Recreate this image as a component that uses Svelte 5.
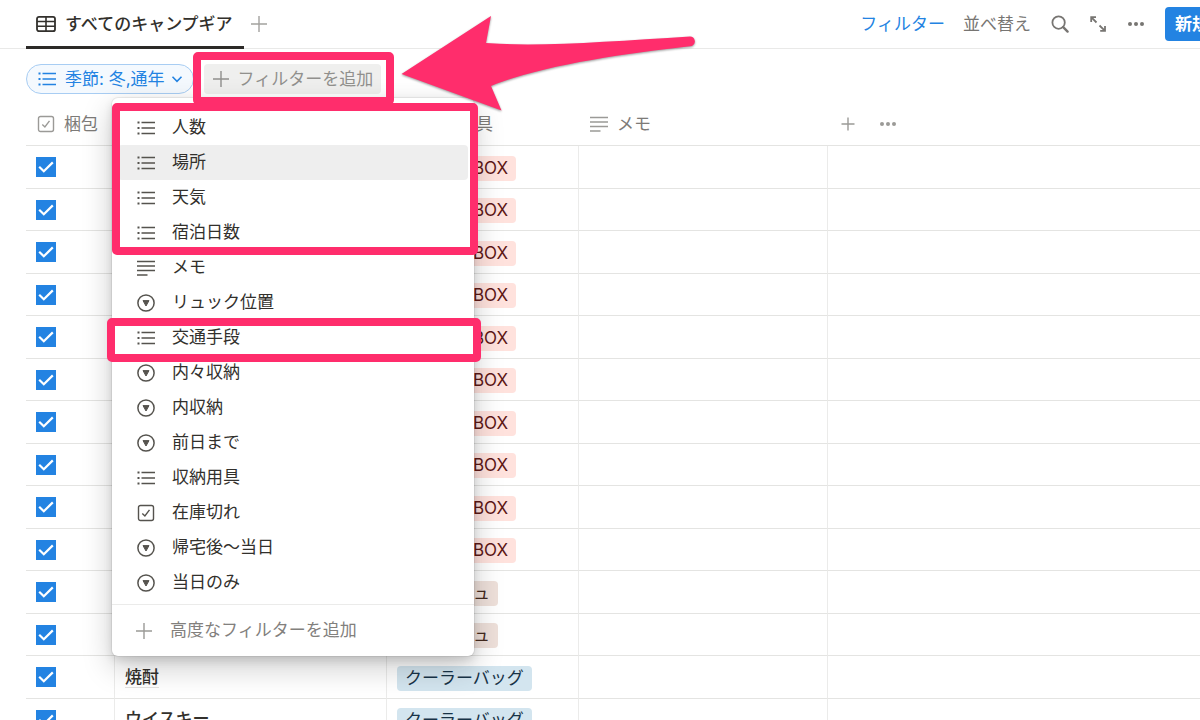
<script lang="ts">
	type Row = { name: string, tag: string, color: string, checked: boolean }

	const box = { name: '', tag: 'コンテナBOX', color: 'red', checked: true }
	const mesh = { name: '', tag: '大メッシュ', color: 'brown', checked: true }
	const cooler = { tag: 'クーラーバッグ', color: 'blue', checked: true }

	let rows: Row[] = $state([
		...Array.from({ length: 10 }, () => ({ ...box })),
		{ ...mesh },
		{ ...mesh },
		{ name: '焼酎', ...cooler },
		{ name: 'ウイスキー', ...cooler }
	])

	const properties = [
		{ icon: 'list', label: '人数' },
		{ icon: 'list', label: '場所' },
		{ icon: 'list', label: '天気' },
		{ icon: 'list', label: '宿泊日数' },
		{ icon: 'text', label: 'メモ' },
		{ icon: 'select', label: 'リュック位置' },
		{ icon: 'list', label: '交通手段' },
		{ icon: 'select', label: '内々収納' },
		{ icon: 'select', label: '内収納' },
		{ icon: 'select', label: '前日まで' },
		{ icon: 'list', label: '収納用具' },
		{ icon: 'check', label: '在庫切れ' },
		{ icon: 'select', label: '帰宅後〜当日' },
		{ icon: 'select', label: '当日のみ' }
	]

	let active = $state(1)
</script>

{#snippet icon(name: string)}
	<svg class="icon" viewBox="0 0 18 18" aria-hidden="true">
		{#if name == 'list'}
			<path d="M4.5 3.5H18M4.5 9H18M4.5 14.5H18" stroke-width="1.4" />
			<path d="M0.500 3.500H2.500M0.500 9H2.500M0.500 14.500H2.500" stroke-width="2" />
		{:else if name == 'text'}
			<path d="M0 2.5H18M0 7H18M0 11.5H18M0 16H10.5" stroke-width="1.4" />
		{:else if name == 'select'}
			<circle cx="9" cy="9" r="8.1" stroke-width="1.5" />
			<path d="M6 6.600H12L9 12Z" fill="currentColor" stroke-width="1" stroke-linejoin="round" />
		{:else if name == 'check'}
			<rect x="1.5" y="1.5" width="15" height="15" rx="2" stroke-width="1.4" />
			<path d="M5.3 9.4L7.9 12L12.5 5.8" stroke-width="1.4" />
		{:else if name == 'plus'}
			<path d="M9 1V17M1 9H17" stroke-width="1.4" />
		{:else if name == 'small-plus'}
			<path d="M9 2.500V15.500M2.500 9H15.500" stroke-width="1.4" />
		{:else if name == 'dots'}
			<g fill="currentColor" stroke="none">
				<circle cx="3" cy="9" r="2" />
				<circle cx="9" cy="9" r="2" />
				<circle cx="15" cy="9" r="2" />
			</g>
		{:else if name == 'search'}
			<circle cx="7.6" cy="7.6" r="6.2" stroke-width="1.8" />
			<path d="M12.2 12.2L16.6 16.6" stroke-width="2.4" stroke-linecap="round" />
		{:else if name == 'expand'}
			<path d="M2.2 7V2.2H7M2.2 2.2L7.5 7.5M16 11V15.8H11.2M16 15.8L10.5 10.5" stroke-width="1.8" />
		{:else if name == 'table'}
			<rect x="0" y="1.8" width="18" height="14.4" rx="2" stroke-width="1.8" />
			<path d="M0 6.5H18M0 11.3H18M9 2V16" stroke-width="1.6" />
		{/if}
	</svg>
{/snippet}

<div class="page">
	<header class="topbar">
		<button class="tab">{@render icon('table')}すべてのキャンプギア</button>
		<button class="add faint" aria-label="ビューを追加">{@render icon('plus')}</button>
		<div class="actions">
			<div class="links">
				<button class="blue-text">フィルター</button>
				<button>並べ替え</button>
			</div>
			<button aria-label="検索">{@render icon('search')}</button>
			<button aria-label="全画面">{@render icon('expand')}</button>
			<button aria-label="その他">{@render icon('dots')}</button>
			<button class="new">新規</button>
		</div>
	</header>

	<div class="filters">
		<button class="pill">
			{@render icon('list')}
			<span>季節: 冬,通年</span>
			<svg class="chevron" viewBox="0 0 12 12" aria-hidden="true"><path d="M1.5 3.8L6 8.3L10.5 3.8" /></svg>
		</button>
		<button class="add-filter">{@render icon('plus')}フィルターを追加</button>
	</div>

	<table>
		<colgroup>
			<col class="c-check" />
			<col class="c-name" />
			<col class="c-tag" />
			<col class="c-memo" />
			<col />
		</colgroup>
		<thead>
			<tr>
				<th><div class="head">{@render icon('check')}梱包</div></th>
				<th></th>
				<th><div class="head">{@render icon('list')}収納用具</div></th>
				<th><div class="head">{@render icon('text')}メモ</div></th>
				<th>
					<div class="head tools">
						<button aria-label="列を追加">{@render icon('small-plus')}</button>
						<button aria-label="列のメニュー">{@render icon('dots')}</button>
					</div>
				</th>
			</tr>
		</thead>
		<tbody>
			{#each rows as row}
				<tr>
					<td>
						<label class="tick">
							<input type="checkbox" aria-label="梱包" bind:checked={row.checked} />
							<svg viewBox="0 0 20 20" aria-hidden="true"><path d="M3.2 9.8L7.8 14.300L16.8 5.400" /></svg>
						</label>
					</td>
					<td>
						{#if row.name}
							<a class="name" href="#top">{row.name}</a>
						{/if}
					</td>
					<td><span class="tag {row.color}">{row.tag}</span></td>
					<td></td>
					<td></td>
				</tr>
			{/each}
		</tbody>
	</table>

	<div class="menu">
		<div class="items">
			{#each properties as property, i}
				<button class="item" class:active={active == i} onmouseenter={() => active = i}>
					{@render icon(property.icon)}{property.label}
				</button>
			{/each}
		</div>
		<button class="advanced">{@render icon('plus')}高度なフィルターを追加</button>
	</div>

	<svg class="marks" width="720" height="380" viewBox="0 0 720 380" aria-hidden="true">
		<rect x="197" y="56" width="193" height="45" rx="1" />
		<rect x="116" y="107" width="358" height="144" rx="1" />
		<rect x="111" y="322" width="366" height="36" rx="1" />
		<path d="M401.5 74L491 16L486 43C540 47 610 41.500 690 36.500A5 5 0 0 1 692 46C620 54 540 66 491 86L501.500 110.500Z" />
	</svg>
</div>

<style>
	:global(body) {
		margin: 0;
		background: #fff;
	}
	.page {
		position: relative;
		height: 100vh;
		overflow: hidden;
		font: 17px/25px Inter, "Noto Sans CJK JP", sans-serif;
		color: #32302c;
	}
	button {
		display: flex;
		align-items: center;
		margin: 0;
		padding: 0;
		border: none;
		background: none;
		font: inherit;
		color: inherit;
		white-space: nowrap;
		cursor: pointer;
	}
	.icon {
		display: block;
		flex: none;
		width: 18px;
		height: 18px;
		fill: none;
		stroke: currentColor;
		overflow: visible;
	}
	.topbar {
		display: flex;
		box-sizing: border-box;
		height: 49px;
		padding-left: 26px;
		border-bottom: 1px solid #e9e9e8;
	}
	.tab {
		gap: 10px;
		margin-bottom: -1px;
		padding: 2px 11px 0;
		border-bottom: 3px solid #2c2a27;
		font-weight: 500;
	}
	.add {
		margin-left: 6px;
	}
	.faint {
		color: #a3a29f;
	}
	.actions {
		display: flex;
		align-items: center;
		gap: 20px;
		margin-left: auto;
		margin-right: -19px;
		color: #777572;
	}
	.links {
		display: flex;
		gap: 18px;
	}
	.blue-text {
		color: #2383e2;
	}
	.new {
		height: 34px;
		padding: 0 10px;
		border-radius: 4px;
		background: #2383e2;
		color: #fff;
		font-weight: 700;
	}
	.filters {
		display: flex;
		gap: 10px;
		height: 34px;
		padding: 15px 0 0 26px;
	}
	.pill {
		box-sizing: border-box;
		gap: 9px;
		height: 30px;
		padding: 0 10px 0 11px;
		border: 1px solid #a8cdf3;
		border-radius: 15px;
		background: #f4f9fe;
		color: #2383e2;
	}
	.chevron {
		width: 12px;
		height: 12px;
		margin-left: -3px;
		fill: none;
		stroke: currentColor;
		stroke-width: 1.6;
	}
	.add-filter {
		gap: 8px;
		height: 30px;
		padding: 0 8px;
		border-radius: 4px;
		background: #efefee;
		color: #91908d;
	}
	table {
		width: calc(100% - 26px);
		margin-left: 26px;
		table-layout: fixed;
		border-collapse: separate;
		border-spacing: 0;
	}
	.c-check {
		width: 89px;
	}
	.c-name {
		width: 272px;
	}
	.c-tag {
		width: 192px;
	}
	.c-memo {
		width: 249px;
	}
	th {
		box-sizing: border-box;
		height: 48px;
		padding: 0 0 0 11px;
		border-bottom: 1px solid #e4e4e2;
		font-weight: 400;
		color: #7d7b78;
	}
	.head {
		display: flex;
		align-items: center;
		gap: 9px;
		padding-top: 5px;
	}
	.head .icon, .tools {
		color: #9b9a97;
	}
	.tools {
		gap: 22px;
	}
	td {
		box-sizing: border-box;
		height: 42px;
		padding: 0 0 0 10px;
		border-right: 1px solid #ebebea;
		border-bottom: 1px solid #e4e4e2;
	}
	tr:nth-child(odd) td {
		height: 43px;
	}
	td:last-child {
		border-right: none;
	}
	.tick {
		display: grid;
		width: 20px;
		height: 20px;
	}
	.tick input, .tick svg {
		grid-area: 1 / 1;
		width: 20px;
		height: 20px;
		margin: 0;
	}
	.tick input {
		appearance: none;
		border: 1px solid #9b9a97;
	}
	.tick input:checked {
		border: none;
		background: #2383e2;
	}
	.tick svg {
		fill: none;
		stroke: #fff;
		stroke-width: 2.2;
		pointer-events: none;
	}
	.name {
		color: inherit;
		font-weight: 500;
		text-decoration: underline;
		text-decoration-color: #e3e2e0;
		text-decoration-thickness: 1px;
		text-underline-offset: 4px;
	}
	.tag {
		display: block;
		width: fit-content;
		height: 25px;
		margin-top: 2px;
		padding: 0 8px;
		border-radius: 4px;
		white-space: nowrap;
	}
	.red {
		background: #ffe2dd;
		color: #5d1715;
	}
	.brown {
		background: #eee0da;
		color: #442a1e;
	}
	.blue {
		background: #d3e5ef;
		color: #183347;
	}
	.menu {
		position: absolute;
		top: 98px;
		left: 112px;
		width: 362px;
		border-radius: 6px;
		background: #fff;
		box-shadow: 0 0 0 1px rgba(15, 15, 15, 0.06), 0 4px 8px rgba(15, 15, 15, 0.12), 0 11px 30px rgba(15, 15, 15, 0.22);
	}
	.items {
		padding: 12px 6px 4px;
		border-bottom: 1px solid #ebebea;
	}
	.item {
		gap: 17px;
		width: 100%;
		height: 35px;
		padding: 0 19px;
		border-radius: 4px;
	}
	.item .icon {
		color: #55534e;
	}
	.item.active {
		background: #eeeeee;
	}
	.advanced {
		gap: 17px;
		width: 100%;
		height: 51px;
		padding: 0 23px;
		color: #82807d;
	}
	.advanced .icon {
		color: #9b9a97;
	}
	.marks {
		position: absolute;
		top: 0;
		left: 0;
		pointer-events: none;
	}
	.marks rect {
		fill: none;
		stroke: #ff2d6c;
		stroke-width: 8;
		stroke-linejoin: round;
	}
	.marks path {
		fill: #ff2d6c;
		filter: drop-shadow(0 1px 1px rgba(0, 0, 0, 0.4));
	}
</style>
